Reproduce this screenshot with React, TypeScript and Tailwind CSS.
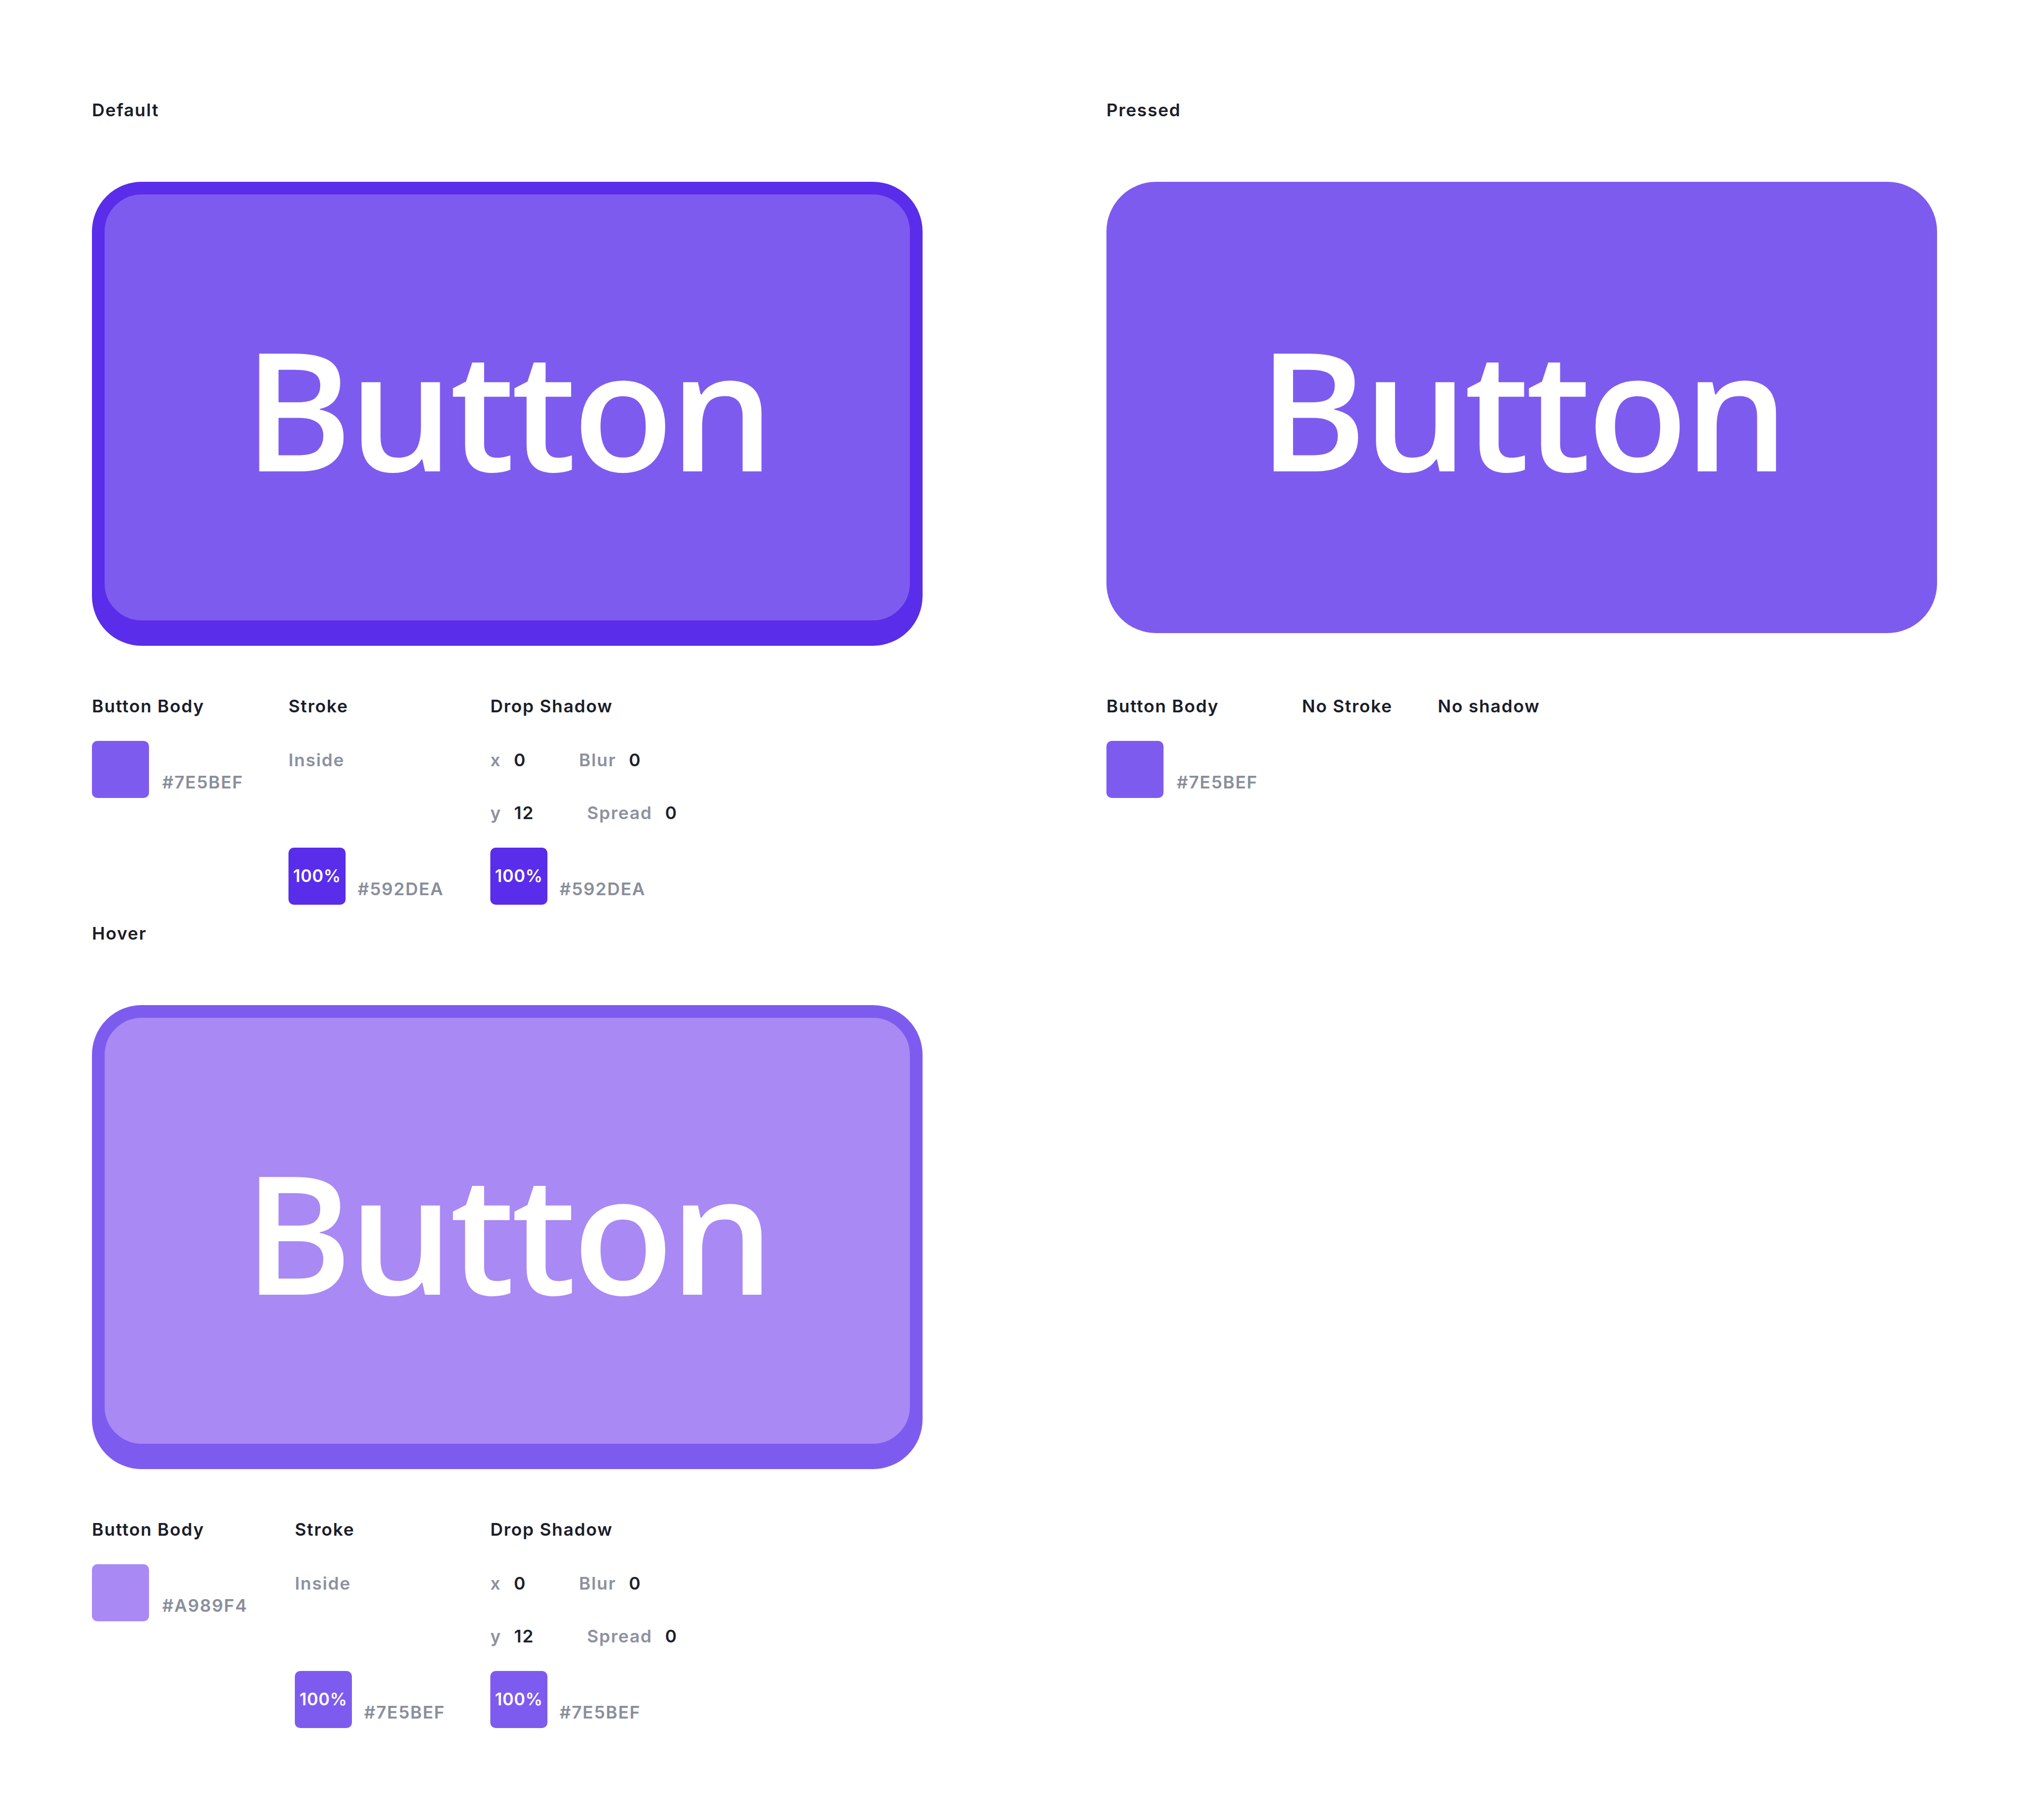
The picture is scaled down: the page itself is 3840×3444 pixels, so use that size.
import React from "react";

const ui = { fontFamily: "Inter, 'Noto Sans', sans-serif" };
const btnFont = { fontFamily: "'Open Sans', 'Noto Sans', sans-serif" };

function StateButton({ variant }: { variant: "default" | "pressed" | "hover" }) {
  const look =
    variant === "default"
      ? "border-[24px] border-[#592DEA] bg-[#7E5BEF] shadow-[0_24px_0_#592DEA]"
      : variant === "hover"
      ? "border-[24px] border-[#7E5BEF] bg-[#A989F4] shadow-[0_24px_0_#7E5BEF]"
      : "bg-[#7E5BEF]";
  return (
    <div className={`flex h-[854px] w-[1572px] items-center justify-center rounded-[94px] ${look}`}>
      <span style={btnFont} className="text-[312px] leading-none font-semibold tracking-[-7px] text-white">
        Button
      </span>
    </div>
  );
}

function Label({ children }: { children: React.ReactNode }) {
  return (
    <div className="text-[33px] leading-[48px] font-semibold tracking-[0.05em] text-[#1a1d29] whitespace-nowrap">
      {children}
    </div>
  );
}

function Swatch({ color, pct }: { color: string; pct?: boolean }) {
  return (
    <div className={`flex h-[108px] w-[108px] items-center justify-center rounded-[10px] ${color}`}>
      {pct && <span className="text-[32px] font-semibold tracking-[0.02em] text-white">100%</span>}
    </div>
  );
}

function Hex({ children }: { children: React.ReactNode }) {
  return (
    <span className="mb-[6px] text-[33px] leading-[48px] font-semibold tracking-[0.05em] text-[#898e9b]">{children}</span>
  );
}

function Pair({ k, v }: { k: string; v: string }) {
  return (
    <div className="flex gap-[24px] text-[33px] leading-[48px] tracking-[0.05em]">
      <span className="font-semibold text-[#8c91a0]">{k}</span>
      <span className="font-semibold text-[#1d1f2c]">{v}</span>
    </div>
  );
}

function Specs({
  body,
  bodyHex,
  stroke,
  strokeHex,
  bodyW,
  strokeW,
}: {
  body: string;
  bodyHex: string;
  stroke: string;
  strokeHex: string;
  bodyW: string;
  strokeW: string;
}) {
  return (
    <div className="mt-[114px] flex">
      <div className={bodyW}>
        <Label>Button Body</Label>
        <div className="mt-[42px] flex items-end gap-[25px]">
          <Swatch color={body} />
          <Hex>{bodyHex}</Hex>
        </div>
      </div>
      <div className={strokeW}>
        <Label>Stroke</Label>
        <div className="mt-[54px] text-[33px] leading-[48px] font-semibold tracking-[0.05em] text-[#8c91a0]">Inside</div>
        <div className="mt-[142px] flex items-end gap-[23px]">
          <Swatch color={stroke} pct />
          <Hex>{strokeHex}</Hex>
        </div>
      </div>
      <div>
        <Label>Drop Shadow</Label>
        <div className="mt-[54px] flex gap-[100px]">
          <Pair k="x" v="0" />
          <Pair k="Blur" v="0" />
        </div>
        <div className="mt-[52px] flex gap-[100px]">
          <Pair k="y" v="12" />
          <Pair k="Spread" v="0" />
        </div>
        <div className="mt-[42px] flex items-end gap-[23px]">
          <Swatch color={stroke} pct />
          <Hex>{strokeHex}</Hex>
        </div>
      </div>
    </div>
  );
}

export default function App() {
  return (
    <main style={ui} className="min-h-[3444px] w-[3840px] bg-white pl-[174px] pt-[184px]">
      <div className="flex gap-[348px]">
        <div className="w-[1572px]">
          <section>
            <Label>Default</Label>
            <div className="mt-[112px]">
              <StateButton variant="default" />
            </div>
            <Specs
              body="bg-[#7E5BEF]"
              bodyHex="#7E5BEF"
              stroke="bg-[#592DEA]"
              strokeHex="#592DEA"
              bodyW="w-[372px]"
              strokeW="w-[382px]"
            />
          </section>
          <section className="mt-[30px]">
            <Label>Hover</Label>
            <div className="mt-[112px]">
              <StateButton variant="hover" />
            </div>
            <Specs
              body="bg-[#A989F4]"
              bodyHex="#A989F4"
              stroke="bg-[#7E5BEF]"
              strokeHex="#7E5BEF"
              bodyW="w-[384px]"
              strokeW="w-[370px]"
            />
          </section>
        </div>
        <div className="w-[1572px]">
          <Label>Pressed</Label>
          <div className="mt-[112px]">
            <StateButton variant="pressed" />
          </div>
          <div className="mt-[114px] flex">
            <div className="w-[370px]">
              <Label>Button Body</Label>
              <div className="mt-[42px] flex items-end gap-[25px]">
                <Swatch color="bg-[#7E5BEF]" />
                <Hex>#7E5BEF</Hex>
              </div>
            </div>
            <div className="w-[257px]">
              <Label>No Stroke</Label>
            </div>
            <Label>No shadow</Label>
          </div>
        </div>
      </div>
    </main>
  );
}
